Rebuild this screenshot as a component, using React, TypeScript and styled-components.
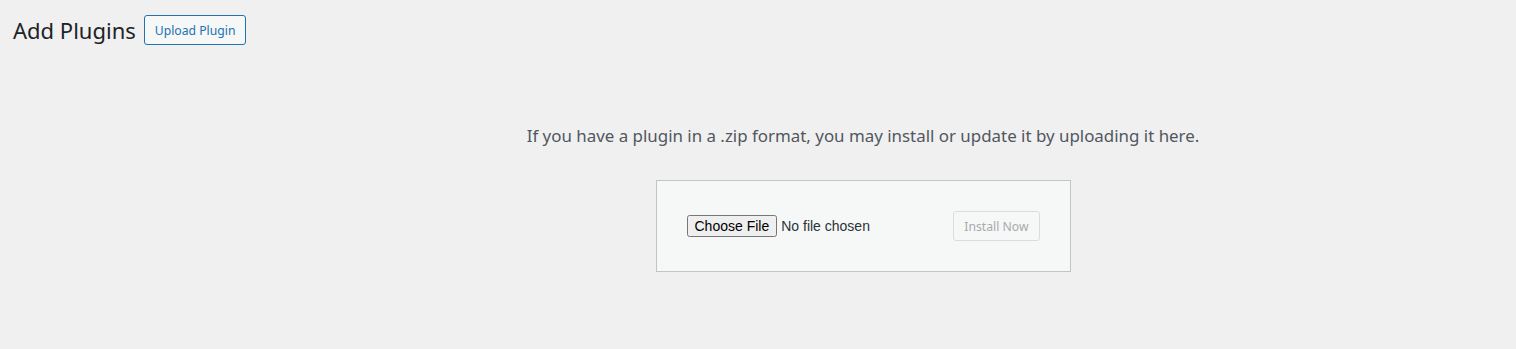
import React from 'react';
import styled, {createGlobalStyle} from 'styled-components';

const GlobalStyle = createGlobalStyle`
    html, body {
        margin: 0;
        padding: 0;
        background: #f0f0f1;
    }
    body {
        color: #3c434a;
        font-family: "Noto Sans", "Liberation Sans", sans-serif;
        font-size: 13px;
    }
`;

const Page = styled.div`
    min-height: 349px;
    padding: 15px 0 0 13px;
    box-sizing: border-box;
`;

const Header = styled.div`
    display: flex;
    align-items: center;
    gap: 8px;
`;

const Title = styled.h1`
    margin: 0;
    font-size: 22px;
    font-weight: 400;
    line-height: 30px;
    color: #1d2327;
`;

const Button = styled.button<{$disabled?: boolean}>`
    height: 30px;
    padding: 0 10px;
    border-radius: 3px;
    font-family: inherit;
    font-size: 12.2px;
    cursor: pointer;
    background: #f6f7f7;
    border: 1px solid ${p => p.$disabled ? '#dcdcde' : '#2271b1'};
    color: ${p => p.$disabled ? '#a7aaad' : '#2271b1'};
`;

const UploadSection = styled.div`
    padding-left: 197px;
    padding-top: 77px;
    display: flex;
    flex-direction: column;
    align-items: center;
`;

const Help = styled.p`
    margin: 0;
    font-size: 16.9px;
    line-height: 27px;
    color: #50575e;
    text-align: center;
`;

const UploadForm = styled.form`
    margin-top: 31px;
    width: 415px;
    box-sizing: border-box;
    padding: 30px;
    background: #f6f7f7;
    border: 1px solid #c3c4c7;
    display: flex;
    align-items: center;
    justify-content: space-between;
`;

const FileInput = styled.input`
    font-family: "Liberation Sans", Arial, sans-serif;
    font-size: 14px;
    color: #2c3338;
`;

export default function App() {
    return (
        <>
            <GlobalStyle/>
            <Page>
                <Header>
                    <Title>Add Plugins</Title>
                    <Button type="button">Upload Plugin</Button>
                </Header>
                <UploadSection>
                    <Help>If you have a plugin in a .zip format, you may install or update it by uploading it here.</Help>
                    <UploadForm onSubmit={e => e.preventDefault()}>
                        <FileInput type="file" name="pluginzip" accept=".zip"/>
                        <Button type="submit" $disabled disabled>Install Now</Button>
                    </UploadForm>
                </UploadSection>
            </Page>
        </>
    );
}
